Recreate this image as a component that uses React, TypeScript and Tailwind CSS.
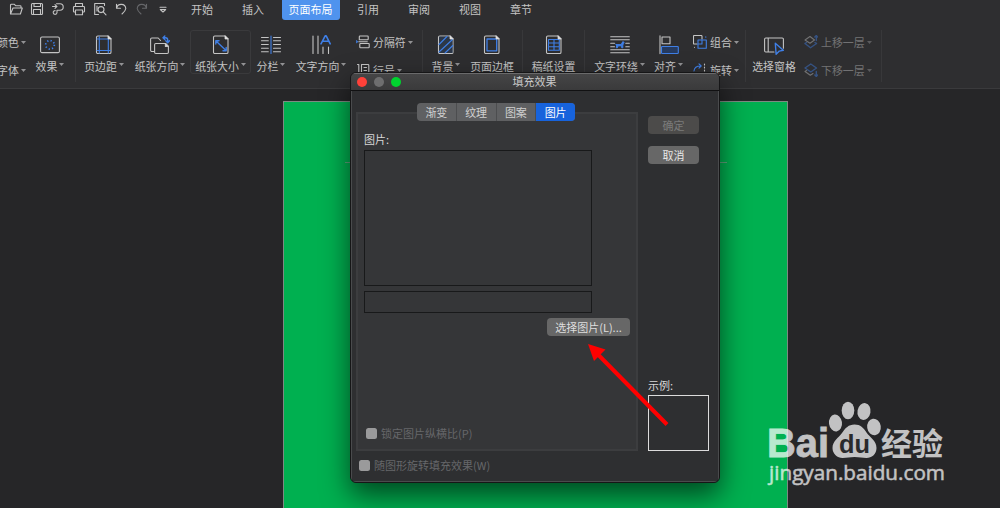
import type { ReactNode } from "react";
import clsx from "clsx";

const G = "#c4c4c4";
const B = "#3f7fe6";

function Svg({ w = 20, h = 20, children }: { w?: number; h?: number; children: ReactNode }) {
  return (
    <svg
      width={w}
      height={h}
      viewBox={`0 0 ${w} ${h}`}
      fill="none"
      stroke={G}
      strokeWidth="1.1"
      strokeLinecap="round"
      strokeLinejoin="round"
      className="block shrink-0"
    >
      {children}
    </svg>
  );
}

// sheet with a folded corner, shared by several ribbon icons
function Sheet({ children }: { children?: ReactNode }) {
  return (
    <Svg>
      <path d="M3.8 1H14l3 3v13.2a1.3 1.3 0 0 1-1.3 1.3H3.8a1.3 1.3 0 0 1-1.3-1.3V2.3A1.3 1.3 0 0 1 3.8 1Z" />
      {children}
      <path d="M14 1v3h3Z" fill="#e0e0e0" stroke="#e0e0e0" strokeWidth=".7" />
    </Svg>
  );
}

const quickIcons: ReactNode[] = [
  <path d="M1.5 12V3.2q0-.9.9-.9h3l1.4 1.5h4.4q.8 0 .8.8V6M1.5 12 4 6h9.3L11.4 12Z" />,
  <>
    <rect x="1.5" y="1.5" width="11" height="11" rx="1" />
    <path d="M4 1.5V4.5h6.5v-3M3.5 12.5V7.5h7v5" />
  </>,
  <>
    <path d="M5.5 1.8h3.5a3 3 0 0 1 0 6.4H6V10.5a1.9 1.9 0 1 1-1.9-1.9" />
    <path d="M1.5 4.5h4.500M4 2.700 5.800 4.500 4 6.300" />
  </>,
  <>
    <path d="M3.5 4.5v-3h7v3M3.5 10H2.3q-.8 0-.8-.8V5.3q0-.8.8-.8h9.4q.8 0 .8.8v3.9q0 .8-.8.8h-1.2" />
    <rect x="3.5" y="8" width="7" height="4.8" />
  </>,
  <>
    <path d="M5.5 12.5H1.7V1.5h9.8v2" />
    <circle cx="8" cy="7.6" r="3" />
    <path d="m10.2 9.8 2.8 3M4 4v5" />
  </>,
  <path d="M2.5 2.3v4h4M2.7 6.1A4.6 4.6 0 0 1 11.800 6.500Q11.500 9 8 12" />,
  <path d="M11.5 2.3v4h-4M11.3 6.1A4.6 4.6 0 0 0 2.200 6.500Q2.500 9 6 12" stroke="#66676a" />,
  <path d="M4 5.2h6M4.3 7.5 7 10l2.7-2.5Z" />,
];

const tabs = ["开始", "插入", "页面布局", "引用", "审阅", "视图", "章节"];

function Caret({ className = "" }: { className?: string }) {
  return (
    <svg width="5" height="3" viewBox="0 0 5 3" className={clsx("ml-[2px] shrink-0", className)}>
      <path d="M0 0h5L2.5 3Z" fill="#929294" />
    </svg>
  );
}

function Tool({ icon, label, width, caret = true, boxed = false }: {
  icon: ReactNode;
  label: string;
  width: string;
  caret?: boolean;
  boxed?: boolean;
}) {
  return (
    <div
      className={clsx(
        "flex h-[44px] shrink-0 flex-col items-center rounded-[3px] border pt-[4px]",
        boxed ? "border-[#3a3a3c]" : "border-transparent",
        width
      )}
    >
      {icon}
      <div className="mt-[3px] flex h-[16px] items-center whitespace-nowrap">
        {label}
        {caret && <Caret className="mb-[4px]" />}
      </div>
    </div>
  );
}

function SmallTool({ icon, label, dim = false }: { icon?: ReactNode; label: string; dim?: boolean }) {
  return (
    <div className={clsx("flex h-[16px] items-center gap-[3px] whitespace-nowrap", dim && "opacity-45")}>
      {icon}
      <span className="flex items-center">
        {label}
        <Caret />
      </span>
    </div>
  );
}

function Stack({ className, children }: { className: string; children: ReactNode }) {
  return <div className={clsx("flex shrink-0 flex-col gap-[12px] pt-[4px]", className)}>{children}</div>;
}

function Divider({ className = "" }: { className?: string }) {
  return <div className={clsx("h-[52px] w-px shrink-0 bg-[#38383a]", className)} />;
}

function Ribbon() {
  return (
    <div className="flex h-[58px] overflow-hidden text-[10.9px]">
      <Stack className="w-[30px]">
        <div className="-ml-[3px]"><SmallTool label="颜色" /></div>
        <div className="-ml-[3px]"><SmallTool label="字体" /></div>
      </Stack>
      <Tool
        width="w-[40px]"
        label="效果"
        icon={
          <Svg>
            <rect x=".6" y="2" width="18.8" height="15.6" rx="1.4" />
            <circle cx="10" cy="9.8" r="4.3" stroke={B} strokeWidth="1.8" strokeDasharray="1.2 2.18" strokeLinecap="butt" />
          </Svg>
        }
      />
      <Divider className="ml-[5px]" />
      <Tool
        width="w-[56px]"
        label="页边距"
        icon={<Sheet><path d="M5.3 1.5v16.5M14.3 4v14M3 4h11M3 15.5h13.5" stroke={B} /></Sheet>}
      />
      <Tool
        width="w-[56px]"
        label="纸张方向"
        icon={
          <Svg>
            <path d="M4.5 16.5H1.8A1.2 1.2 0 0 1 .6 15.3V4.2A1.2 1.2 0 0 1 1.8 3h6.4l2.3 2.5" />
            <path d="M5.8 8.5h9.6l3 3v5.8a1.2 1.2 0 0 1-1.2 1.2H5.8a1.2 1.2 0 0 1-1.2-1.2V9.7a1.2 1.2 0 0 1 1.2-1.2Z" />
            <path d="M15.4 8.5v3h3Z" fill="#e0e0e0" />
            <path d="M13.2 2.8h2.3q2.2 0 2.2 2.2v2.5M14.8 1 13 2.8l1.8 1.8M15.8 5.8l1.9 1.9 1.8-1.9" stroke={B} strokeWidth="1.4" />
          </Svg>
        }
      />
      <Tool
        width="ml-[2px] w-[61px]"
        boxed
        label="纸张大小"
        icon={<Sheet><path d="m5 6 10 9.5M8 5.8H4.8V9M12 15.7h3.2v-3.2" stroke={B} strokeWidth="1.4" /></Sheet>}
      />
      <Tool
        width="w-[40px]"
        label="分栏"
        icon={
          <Svg>
            <path d="M.5 2.5h6.8M.5 5.8h6.8M.5 9.5h6.8M.5 13.2h6.8M.5 16.8h6.8M12.5 2.5h7M12.5 5.8h7M12.5 9.5h7M12.5 13.2h7M12.5 16.8h7" />
            <path d="M10 1v17.5" stroke={B} />
          </Svg>
        }
      />
      <Tool
        width="w-[60px]"
        label="文字方向"
        icon={
          <Svg>
            <path d="M2 1v17.5M7 1v17.5M12 12v6.5M17.5 12v6.5" />
            <path d="M10 8.8 14.2.8h1l4 8M11.5 6.2h6.2" stroke={B} strokeWidth="1.6" />
          </Svg>
        }
      />
      <Stack className="w-[71px] pl-[5px]">
        <SmallTool
          label="分隔符"
          icon={
            <Svg w={14} h={14}>
              <path d="M3.3 4.8V1.7q0-.7.7-.7h7.500q.7 0 .7.7v2.400q0 .7-.7.7H3.300M4.500 12.8q-.7 0-.7-.7V9.2q0-.7.7-.7h8q.7 0 .7.7v2.800q0 .8-.7.8ZM2.800 6.700h8.500" />
              <path d="M.7 5.700 1.900 6.700.7 7.700Z" fill={B} stroke={B} strokeWidth=".8" />
            </Svg>
          }
        />
        <SmallTool
          label="行号"
          icon={
            <Svg w={14} h={14}>
              <path d="M5.5 1.5H12q.8 0 .8.8V13H5.5ZM1.5 1.5h1.3V13M8 4.5h2.5M8 7.5h2.5" />
            </Svg>
          }
        />
      </Stack>
      <Divider />
      <Tool
        width="w-[46px]"
        label="背景"
        icon={<Sheet><path d="M3 1.500h11l3 3v13.500H3Z" fill="#29405f" stroke="none" opacity=".5" /><path d="M3 9.5 11 1.500M3 17 16.5 4.5M9 18l7.800-7.500" stroke={B} /></Sheet>}
      />
      <Tool
        width="w-[46px]"
        label="页面边框"
        caret={false}
        icon={<Sheet><rect x="5" y="4" width="9.7" height="11.8" stroke={B} strokeWidth="1.3" /></Sheet>}
      />
      <Divider className="ml-[7px]" />
      <Tool
        width="w-[61px]"
        label="稿纸设置"
        caret={false}
        icon={<Sheet><path d="M4.5 4.5h10.8v10.8H4.5ZM4.5 8h10.8M4.5 11.8h10.8M10 4.5V15.300" stroke={B} /></Sheet>}
      />
      <Divider />
      <Tool
        width="w-[69px]"
        label="文字环绕"
        icon={
          <Svg>
            <path d="M.7 1.8h18.6M.7 4.8h18.6M.7 8.3h3.8M.7 11.8h3.8M.7 14.8h18.6M.7 17.8h18.6M15.8 8.3h3.5M15.8 11.8h3.5" />
            <path d="M6 9.4l1 .2h4.2l1.6-3 1.5 1-.9.8-.6 1.8v2.6h-1.1v-2H8.2l-.8 2H6.3l.3-2.4Z" fill={B} stroke={B} strokeWidth="1" />
          </Svg>
        }
      />
      <Tool
        width="w-[29px]"
        label="对齐"
        icon={
          <Svg>
            <path d="M1 .8v17.8M3 2h8v6.8H3Z" />
            <rect x="2.5" y="11.5" width="16.8" height="7" rx=".8" stroke={B} fill="#263b60" />
          </Svg>
        }
      />
      <Stack className="w-[62px] pl-[10px]">
        <SmallTool
          label="组合"
          icon={
            <Svg w={14} h={14}>
              <path d="M4 9H1.3q-.8 0-.8-.8V1.3q0-.8.8-.8h6.9q.8 0 .8.8V4" />
              <rect x="5" y="5" width="8.3" height="8.3" stroke={B} />
              <path d="M9 5v4H5M12.8 1.8v.4" stroke={B} />
              <path d="M1.500 12.200v.1" />
            </Svg>
          }
        />
        <SmallTool
          label="旋转"
          icon={
            <Svg w={14} h={14}>
              <path d="M1 8q.5-5 6.500-5M6 .800l2.200 2.200-2.200 2.200" stroke={B} />
              <path d="M11.5 1v12" strokeDasharray="1 2" />
            </Svg>
          }
        />
      </Stack>
      <Divider />
      <Tool
        width="w-[56px]"
        label="选择窗格"
        caret={false}
        icon={
          <Svg>
            <path d="M10 17H1.8a1.2 1.2 0 0 1-1.2-1.2V4.2A1.2 1.2 0 0 1 1.8 3h16.4a1.2 1.2 0 0 1 1.2 1.2v9M4.2 3v14" />
            <path d="m11.3 8.3 8 7-4 .8-3.2 3.2Z" stroke={B} strokeWidth="1.4" />
          </Svg>
        }
      />
      <Stack className="w-[79px] pl-[2px]">
        <SmallTool
          dim
          label="上移一层"
          icon={
            <Svg w={14} h={14}>
              <path d="m1 5 5-3.5L10.5 5 6 8.2Z" />
              <path d="M1 8.5 6.5 12.8 12.5 8.5M1 8.5l1.5-1M12.5 8.5l-1.5-1M12.3 5.5v-5M10.8 2 12.3.5 13.6 2" stroke={B} strokeWidth="1.4" />
            </Svg>
          }
        />
        <SmallTool
          dim
          label="下移一层"
          icon={
            <Svg w={14} h={14}>
              <path d="m1 5 5.8-4L12.5 5 6.8 9Z" stroke={B} strokeWidth="1.4" />
              <path d="M1 8.5 6.3 12.3 9 10.5M1 8.5l1.5-1" />
              <path d="M12.3 8.5v5M10.8 12l1.5 1.5 1.3-1.5" stroke={B} strokeWidth="1.4" />
            </Svg>
          }
        />
      </Stack>
      <Divider />
    </div>
  );
}

function PushButton({ className, children }: { className: string; children: ReactNode }) {
  return (
    <div className={clsx("flex h-[18px] items-center justify-center rounded-[4px] text-[11px]", className)}>
      {children}
    </div>
  );
}

function Check({ children }: { children: ReactNode }) {
  return (
    <div className="flex h-[16px] items-center gap-[4px] text-[11px] text-[#66676a]">
      <span className="h-[11px] w-[11px] rounded-[2.5px] bg-[#9a9a9b]" />
      {children}
    </div>
  );
}

function FillEffectsDialog() {
  const pages = ["渐变", "纹理", "图案", "图片"];
  return (
    <div className="absolute left-[350px] top-[72px] flex h-[411px] w-[370px] flex-col overflow-hidden rounded-[6px] border border-[#161617] bg-[#2e2f31] shadow-[0_12px_28px_rgba(0,0,0,0.6)]">
      {/* Title bar */}
      <div className="grid h-[18px] shrink-0 grid-cols-[1fr_auto_1fr] items-center border-b border-t border-b-[#111112] border-t-[#6a6a6b] bg-linear-to-b from-[#454546] to-[#3a3a3b]">
        <div className="flex gap-[7px] pl-[6px] pb-[1px]">
          <span className="h-[10px] w-[10px] rounded-full bg-[#ff4139]" />
          <span className="h-[10px] w-[10px] rounded-full bg-[#6e6e6f]" />
          <span className="h-[10px] w-[10px] rounded-full bg-[#00d32f]" />
        </div>
        <span className="pb-[1px] pr-[1px] text-[11px] leading-[15px] text-[#c9c9c9]">填充效果</span>
      </div>

      <div className="flex flex-1 border-x border-b border-[#4a4b4d]">
        {/* Picture page */}
        <div className="flex w-[286px] flex-col pl-[4px] pt-[21px]">
          <div className="h-[339px] w-[282px] border-2 border-[#3c3d3f] bg-[#353638] px-[6px]">
            <div className="-mt-[11px] ml-[53px] flex h-[18px] w-[158px] overflow-hidden rounded-[4px] bg-[#5f6062] text-[11px] text-[#d0d0d0]">
              {pages.map((page) => (
                <div
                  key={page}
                  className={clsx(
                    "flex flex-1 items-center justify-center border-r last:border-r-0",
                    page === "图片" ? "bg-[#1763dc] text-white" : "border-[#4c4d4f]"
                  )}
                >
                  {page}
                </div>
              ))}
            </div>
            <div className="mt-[10px] h-[19px] text-[11px] leading-[17px] text-[#d8d8d8]">图片:</div>
            <div className="h-[136px] w-[228px] border border-[#18191a]" />
            <div className="mt-[5px] h-[22px] w-[228px] border border-[#18191a]" />
            <PushButton className="ml-[183px] mt-[5px] w-[83px] bg-[#676767] text-[#dedede]">选择图片(L)...</PushButton>
            <div className="ml-[2px] mt-[89px]">
              <Check>锁定图片纵横比(P)</Check>
            </div>
          </div>
          <div className="ml-[3px] mt-[6px]">
            <Check>随图形旋转填充效果(W)</Check>
          </div>
        </div>

        {/* Actions and sample */}
        <div className="flex flex-col pl-[10px] pt-[25px]">
          <PushButton className="w-[51px] bg-[#4c4b4a] text-[#7b7b7b]">确定</PushButton>
          <PushButton className="mt-[12px] w-[51px] bg-[#676767] text-[#e6e6e6]">取消</PushButton>
          <div className="mt-[213px] h-[18px] text-[11px] leading-[17px] text-[#d8d8d8]">示例:</div>
          <div className="h-[56px] w-[61px] border border-[#dcdcdc]" />
        </div>
      </div>
    </div>
  );
}

function Watermark() {
  return (
    <svg width="200" height="106" viewBox="755 391 200 106" className="absolute left-[755px] top-[391px]">
      <g fill="#fff" opacity=".72">
        <text x="767" y="457" fontFamily="Liberation Sans" fontWeight="700" fontSize="40" textLength="62" lengthAdjust="spacingAndGlyphs" stroke="#fff" strokeWidth=".8">Bai</text>
        <ellipse cx="835.5" cy="423" rx="6.5" ry="8.5" transform="rotate(-8 835.5 423)" />
        <ellipse cx="848" cy="410.5" rx="6.3" ry="8.7" />
        <ellipse cx="864" cy="411.5" rx="6.5" ry="8.5" transform="rotate(10 864 411.5)" />
        <ellipse cx="874" cy="427" rx="6.8" ry="8.3" transform="rotate(-8 874 427)" />
        <path d="M854.5 424.500c6 0 9 3.500 12 8 3 4.500 10 8 10 15.500 0 6.500-5 10-10 10-4 0-7-1-12-1s-7 1-12 1c-5 0-10-4-10-10 0-7 6-10 9.500-15 3.500-5 6.500-8.500 12.500-8.500Z" />
        <text x="881" y="454.5" fontFamily="Noto Sans CJK SC" fontWeight="700" fontSize="31" textLength="62" lengthAdjust="spacingAndGlyphs">经验</text>
        <text x="769" y="480" fontFamily="Open Sans" fontWeight="400" fontSize="20.5" textLength="176" lengthAdjust="spacingAndGlyphs" stroke="#fff" strokeWidth=".5">jingyan.baidu.com</text>
      </g>
      <text x="839" y="453" fill="#2a2a2c" fontFamily="Liberation Sans" fontWeight="700" fontSize="26" textLength="31" lengthAdjust="spacingAndGlyphs">du</text>
    </svg>
  );
}

export default function App() {
  return (
    <div className="relative flex h-[508px] w-[1000px] flex-col overflow-hidden bg-[#262628] font-['Noto_Sans_CJK_SC',sans-serif] text-[#c4c4c4]">
      <header className="h-[89px] shrink-0 border-b border-[#3a3a3c] bg-[#2e2e30]">
        <div className="flex h-[30px] items-start">
          <div className="flex w-[176.5px] pl-[5.5px] pt-[2px]">
            {quickIcons.map((icon, i) => (
              <div key={i} className="flex w-[21px] shrink-0 justify-center">
                <Svg w={14} h={14}>{icon}</Svg>
              </div>
            ))}
          </div>
          {tabs.map((tab) => (
            <div
              key={tab}
              className={clsx(
                "flex h-[20px] shrink-0 items-center whitespace-nowrap pb-[1px] text-[11px]",
                tab === "页面布局" ? "mx-[3px] rounded-b-[3px] bg-[#4f93ee] px-[7px] text-white" : "px-[14.5px]"
              )}
            >
              {tab}
            </div>
          ))}
        </div>
        <Ribbon />
      </header>

      {/* Page */}
      <main className="flex flex-1 pl-[283px] pt-[12px]">
        <div className="w-[505px] border-x border-t border-[#7d8a82] bg-[#00b050] pt-[60px]">
          <div className="mx-auto h-px w-[382px] bg-[#5fa37c]" />
        </div>
      </main>

      <FillEffectsDialog />

      {/* Pointer to the picture button */}
      <svg width="90" height="90" viewBox="582 339 90 90" className="absolute left-[582px] top-[339px]">
        <path d="M597 353.5 667 424.5" stroke="#f00" strokeWidth="4" />
        <path d="M588 344 605.5 349.5 594 361Z" fill="#f00" />
      </svg>

      <Watermark />
    </div>
  );
}
